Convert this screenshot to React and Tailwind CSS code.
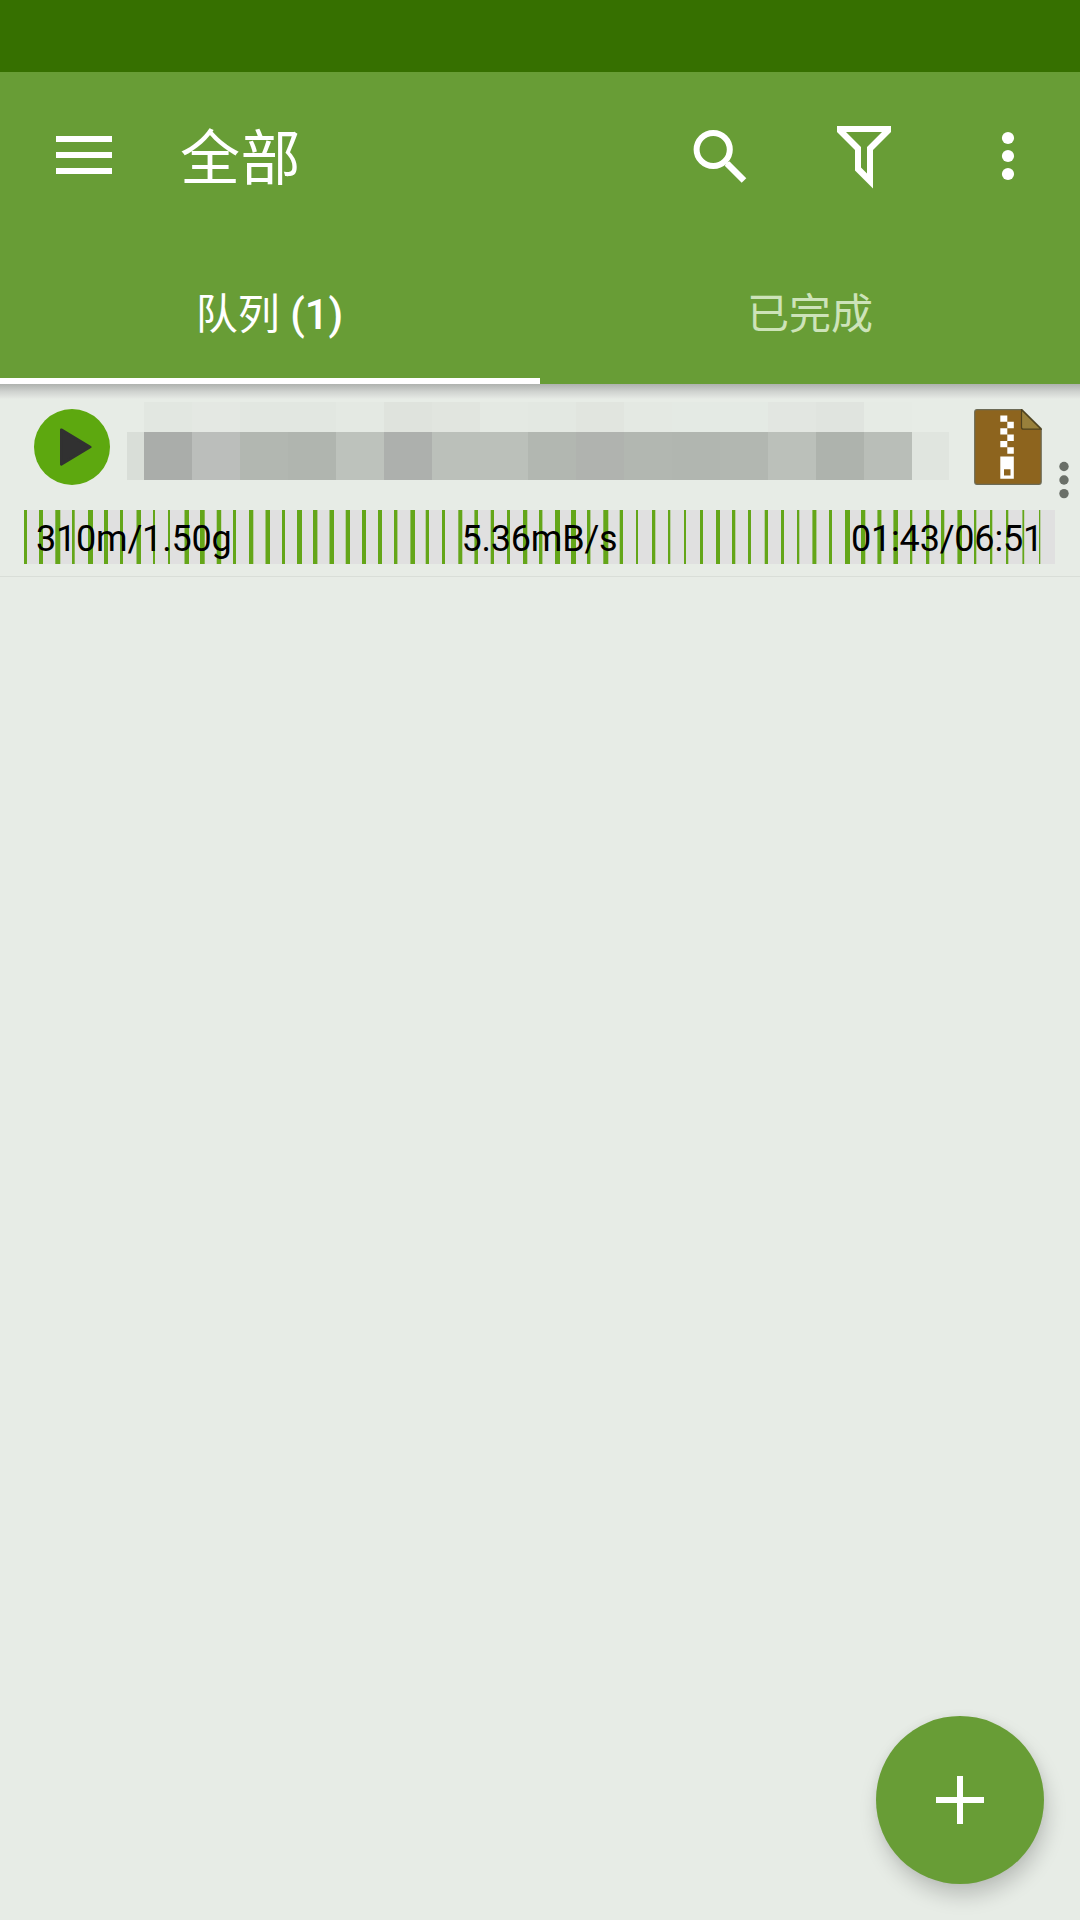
const FONT = "font-['Roboto','Noto_Sans_CJK_SC',sans-serif]";

// Downloaded chunks along the progress track: [start, width]
const CHUNKS = [
  [24, 3], [39, 4], [55.3, 5], [72, 2.7], [88, 5], [104, 4], [120, 3], [136.5, 4.5], [153, 2], [168, 2],
  [184.5, 4.5], [200, 4.7], [216.7, 4.5], [233, 3], [249, 4.3], [265.5, 4.5], [282, 3], [297, 5], [313, 4.4], [329.5, 4.5],
  [345.7, 4.3], [362, 4], [378, 4], [394, 3.4], [410.4, 4.6], [425.7, 3.3], [442, 3], [458.3, 4], [474.4, 3.6], [490.7, 3.3],
  [507, 3], [523, 4.3], [539, 3.4], [555, 5], [571, 5], [587, 3.4], [603.3, 5], [619.7, 3.3], [636, 2], [652, 3.3],
  [668, 2.3], [684, 2], [700, 3], [716, 4], [732, 3.3], [748, 3], [764.7, 3.3], [781, 3], [797, 2.3], [812.4, 4],
  [829, 3], [845, 5], [861, 4.3], [877.4, 4], [893.4, 4.6], [910, 2.3], [926, 3.3], [941, 3.3], [957.4, 4.6], [974, 2.3],
  [990, 2.3], [1006, 2.3], [1022.4, 1.8], [1039, 1.3],
];

const TOP_CELLS = [
  "#e2e7e1", "#e4e8e3", "#e2e7e1", "#e2e7e1", "#e4e9e3", "#dfe3dd", "#e1e5df", "#e4e9e3",
  "#e3e8e2", "#e1e5df", "#e4e9e3", "#e4eae4", "#e4eae4", "#e2e6e1", "#e0e4df", "#e6ebe5",
];
const MAIN_CELLS = [
  "#aaadaa", "#bbbebb", "#b2b7b1", "#b0b5af", "#bdc2bc", "#adb0ad", "#bbc0ba", "#bbc0ba",
  "#b2b7b1", "#b0b3af", "#b2b7b1", "#b1b6b0", "#b2b7b1", "#bbc0ba", "#aeb3ad", "#b9beb8",
];

function AppBar() {
  return (
    <div className="flex h-[168px] items-center">
      <button className="ml-14 flex h-[56px] w-14 items-center justify-center pb-0.5">
        <svg width="56" height="38" viewBox="0 0 56 38" fill="#fff" shapeRendering="crispEdges">
          <path d="M0 0h56v6H0zM0 16h56v6H0zM0 32h56v6H0z" />
        </svg>
      </button>
      <h1 className="ml-[68px] pt-[8px] text-[60px] leading-[84px] font-normal tracking-[0.5px] text-white">全部</h1>
      <div className="ml-auto flex">
        <button className="flex h-36 w-36 items-center justify-center">
          <svg width="72" height="72" viewBox="0 0 72 72" fill="none" stroke="#fff" strokeWidth="6">
            <circle cx="29.200" cy="29.500" r="16.600" />
            <path d="M43 43.500L60 60.500" strokeWidth="6.500" />
            <circle cx="44.300" cy="44.800" r="1.200" fill="#fff" strokeWidth="3" />
          </svg>
        </button>
        <button className="flex h-36 w-36 items-center justify-center">
          <svg width="72" height="72" viewBox="0 0 72 72" fill="#fff" fillRule="evenodd">
            <path d="M9 6h54v6L45 30v38.500L27 50.500V30L9 12zM18 12l15 15v20.500l6 6V27l15-15z" />
          </svg>
        </button>
        <button className="flex h-36 w-36 items-center justify-center">
          <svg width="72" height="72" viewBox="0 0 72 72" fill="#fff">
            <circle cx="36" cy="18" r="6.100" />
            <circle cx="36" cy="36" r="6.100" />
            <circle cx="36" cy="54" r="6.100" />
          </svg>
        </button>
      </div>
    </div>
  );
}

function Tabs() {
  return (
    <div className="grid h-36 grid-cols-2 text-[42px] leading-[60px]">
      <div className="flex items-center justify-center border-b-[6px] border-white pt-[11px] pr-px text-white">
        <span>队列 <span className="font-medium">(1)</span></span>
      </div>
      <div className="flex items-center justify-center border-b-[6px] border-transparent pt-[11px] text-[#cde3b9]">
        <span>已完成</span>
      </div>
    </div>
  );
}

function MaskedName() {
  return (
    <div className="ml-[17px] h-[78px] w-[822px]">
      <div className="ml-[17px] flex h-[30px]">
        {TOP_CELLS.map((c, i) => (
          <div key={i} className="h-full w-12" style={{ backgroundColor: c }} />
        ))}
      </div>
      <div className="flex h-12">
        <div className="w-[17px] bg-[#d9ded8]" />
        {MAIN_CELLS.map((c, i) => (
          <div key={i} className="h-full w-12" style={{ backgroundColor: c }} />
        ))}
        <div className="w-[37px] bg-[#e0e5df]" />
      </div>
    </div>
  );
}

function ZipIcon() {
  return (
    <svg className="mt-[7px] ml-[25px]" width="68" height="76" viewBox="0 0 68 76">
      <path d="M3 .7H48L67.2 19.5V73q0 2.3-2.3 2.3H3Q.7 75.300 .7 73V3Q.7 .7 3 .7z" fill="#8d641e" stroke="#6c6a55" strokeWidth="1.200" />
      <path d="M47.500 .7L67.200 20.200H49.500q-2 0-2-2z" fill="#98803b" stroke="#4f421d" strokeWidth="1.200" />
      <path
        d="M26.300 6.500h7v6.300h6.500v6.400h-6.500v-6.400h-7zM26.300 19.200h7v6.400h6.500v6.400h-6.500v-6.400h-7zM26.300 32h7v6.300h6.500v6.400h-6.500v-6.400h-7zM26.300 47.500h13.500v22.300H26.300zM30 60.200v6.300h6.500v-6.300z"
        fill="#fff"
        fillRule="evenodd"
      />
    </svg>
  );
}

function DownloadRow() {
  return (
    <div className="h-[193px] border-b border-[#d9ded8] pt-[18px]">
      <div className="flex h-[108px]">
        <svg className="mt-[7px] ml-[34px]" width="76" height="76" viewBox="0 0 76 76">
          <circle cx="38" cy="38" r="38" fill="#5da80f" />
          <path d="M27.300 20.700L56.300 38L27.300 55.300z" fill="#313131" stroke="#313131" strokeWidth="2.600" strokeLinejoin="round" />
        </svg>
        <MaskedName />
        <ZipIcon />
        <svg className="mt-[60px] ml-[17px]" width="10" height="37" viewBox="0 0 10 37" overflow="visible" fill="#6a6f68">
          <circle cx="5" cy="4.500" r="4.700" />
          <circle cx="5" cy="18" r="4.700" />
          <circle cx="5" cy="31.600" r="4.700" />
        </svg>
      </div>
      <div className="relative mx-6 h-[54px] w-[1031px] bg-[#e0e0e0]">
        <svg className="absolute inset-0" width="1031" height="54" viewBox="24 0 1031 54" fill="#64a619">
          {CHUNKS.map(([x, w]) => (
            <rect key={x} x={x} y="0" width={w} height="54" />
          ))}
        </svg>
        <div className="relative grid h-full grid-cols-3 items-center pt-1 pr-[12px] pl-3 text-[36px] leading-[50px] tracking-[-0.2px] text-black">
          <span>310m/1.50g</span>
          <span className="text-center">5.36mB/s</span>
          <span className="text-right">01:43/06:51</span>
        </div>
      </div>
    </div>
  );
}

export default function App() {
  return (
    <div className={`relative flex h-[1920px] w-[1080px] flex-col overflow-hidden bg-[#e7ece6] ${FONT}`}>
      <div className="h-[72px] bg-[#367000]" />
      <header className="h-[312px] bg-[#689d36]">
        <AppBar />
        <Tabs />
      </header>
      <main className="relative">
        <div className="absolute inset-x-0 top-0 h-[15px] bg-linear-to-b from-[#aeb2ae] via-[#cfd2cf] to-[#e7ebe6]" />
        <DownloadRow />
      </main>
      <button className="absolute right-9 bottom-9 flex h-[168px] w-[168px] items-center justify-center rounded-full bg-[#689d36] shadow-[3px_12px_20px_rgba(0,0,0,0.18),0_0_10px_rgba(0,0,0,0.05)]">
        <svg width="48" height="48" viewBox="0 0 48 48" fill="#fff" shapeRendering="crispEdges">
          <path d="M21 0h6v21h21v6H27v21h-6V27H0v-6h21z" />
        </svg>
      </button>
    </div>
  );
}
